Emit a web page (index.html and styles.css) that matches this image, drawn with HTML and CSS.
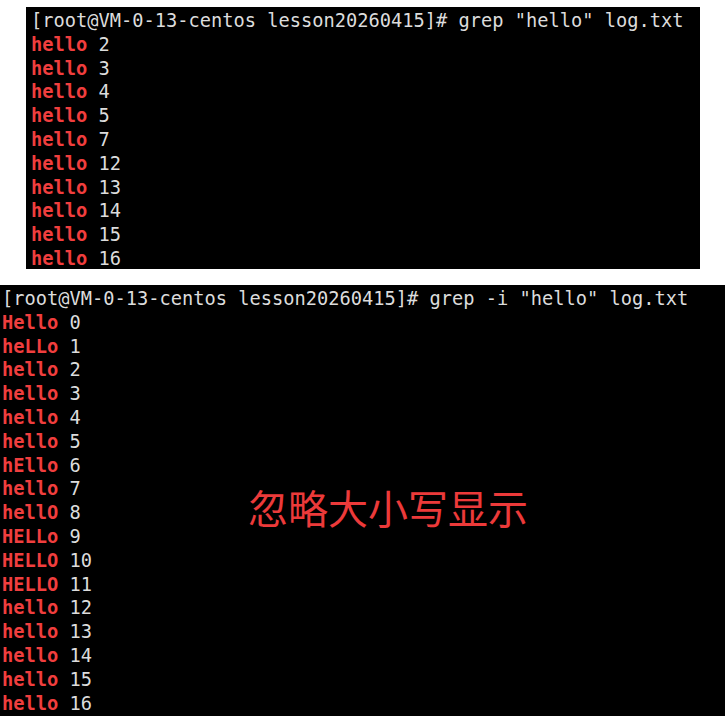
FILE: index.html
```html
<!DOCTYPE html>
<html>
<head>
<meta charset="utf-8">
<link rel="stylesheet" href="styles.css">
</head>
<body>
<div class="page">
  <div class="term term-a">
    <div class="line">[root@VM-0-13-centos lesson20260415]# grep "hello" log.txt</div>
    <div class="line"><b class="m">hello</b> 2</div>
    <div class="line"><b class="m">hello</b> 3</div>
    <div class="line"><b class="m">hello</b> 4</div>
    <div class="line"><b class="m">hello</b> 5</div>
    <div class="line"><b class="m">hello</b> 7</div>
    <div class="line"><b class="m">hello</b> 12</div>
    <div class="line"><b class="m">hello</b> 13</div>
    <div class="line"><b class="m">hello</b> 14</div>
    <div class="line"><b class="m">hello</b> 15</div>
    <div class="line"><b class="m">hello</b> 16</div>
  </div>
  <div class="term term-b">
    <div class="line">[root@VM-0-13-centos lesson20260415]# grep -i "hello" log.txt</div>
    <div class="line"><b class="m">Hello</b> 0</div>
    <div class="line"><b class="m">heLLo</b> 1</div>
    <div class="line"><b class="m">hello</b> 2</div>
    <div class="line"><b class="m">hello</b> 3</div>
    <div class="line"><b class="m">hello</b> 4</div>
    <div class="line"><b class="m">hello</b> 5</div>
    <div class="line"><b class="m">hEllo</b> 6</div>
    <div class="line"><b class="m">hello</b> 7</div>
    <div class="line"><b class="m">hellO</b> 8</div>
    <div class="line"><b class="m">HELLo</b> 9</div>
    <div class="line"><b class="m">HELLO</b> 10</div>
    <div class="line"><b class="m">HELLO</b> 11</div>
    <div class="line"><b class="m">hello</b> 12</div>
    <div class="line"><b class="m">hello</b> 13</div>
    <div class="line"><b class="m">hello</b> 14</div>
    <div class="line"><b class="m">hello</b> 15</div>
    <div class="line"><b class="m">hello</b> 16</div>
    <div class="note">忽略大小写显示</div>
  </div>
</div>
</body>
</html>
```
FILE: styles.css
```css
html, body {
  margin: 0;
  padding: 0;
  background: #ffffff;
}
.page {
  width: 725px;
  height: 716px;
  overflow: hidden;
  padding-top: 7px;
  box-sizing: border-box;
}
.term {
  background: #000000;
  color: #dcdcdc;
  font-family: "DejaVu Sans Mono", monospace;
  font-size: 18.7px;
  line-height: 23.8px;
  box-sizing: border-box;
}
.line {
  white-space: pre;
  height: 23.8px;
}
.term-a {
  margin-left: 26px;
  width: 674px;
  height: 262px;
  padding: 2px 0 0 5px;
}
.term-b {
  position: relative;
  margin-top: 16px;
  width: 725px;
  height: 440px;
  padding: 2px 0 0 2px;
}
.m {
  color: #f03e3e;
  font-weight: bold;
}
.note {
  position: absolute;
  left: 248px;
  top: 202px;
  font-family: "Noto Sans CJK SC", sans-serif;
  font-size: 40px;
  line-height: 1;
  color: #ec3a3a;
  white-space: nowrap;
}
```
